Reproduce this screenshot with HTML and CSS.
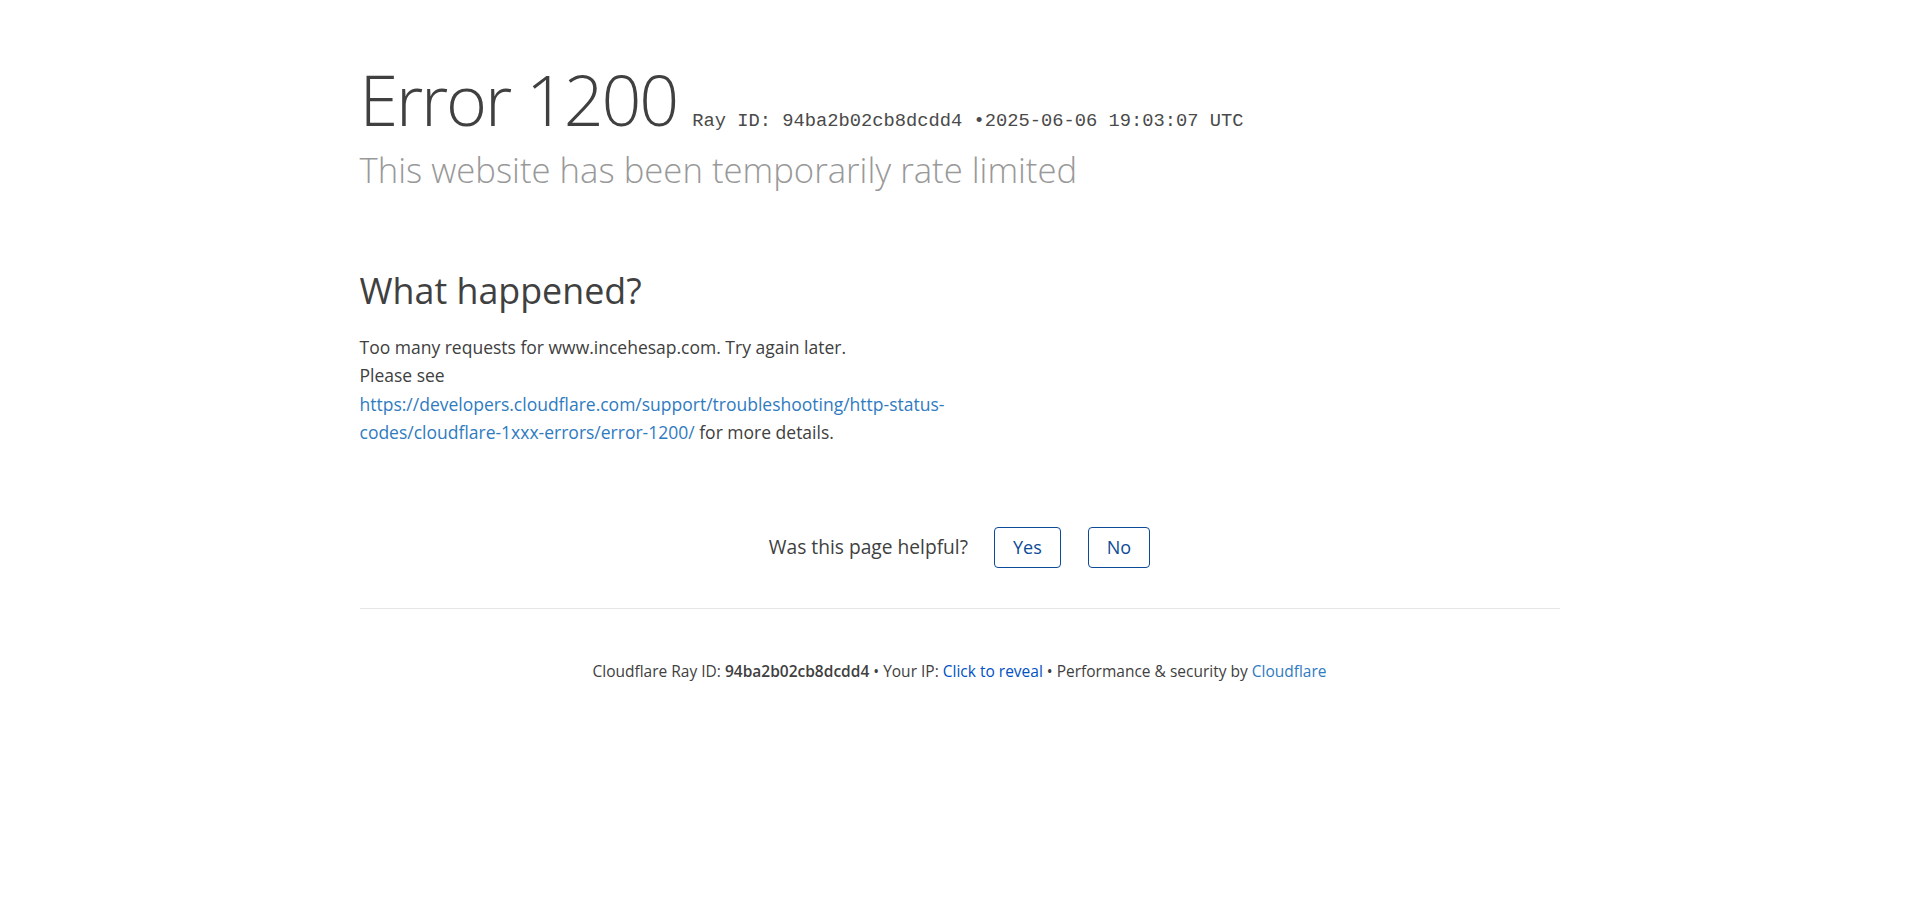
FILE: index.html
```html
<!DOCTYPE html>
<html lang="en">
<head>
<meta charset="utf-8">
<title>Error 1200 - Rate limited</title>
<link rel="stylesheet" href="styles.css">
</head>
<body>
<div class="page">
  <header class="overview">
    <h1 class="title"><span class="code">Error 1200</span> <small class="ray">Ray ID: 94ba2b02cb8dcdd4 •2025-06-06 19:03:07 UTC</small></h1>
    <h2 class="subheadline">This website has been temporarily rate limited</h2>
  </header>

  <section class="details">
    <div class="column">
      <h2 class="section-title">What happened?</h2>
      <p class="text">Too many requests for www.incehesap.com. Try again later.<br>Please see <a class="link" href="#">https://developers.cloudflare.com/support/troubleshooting/http-status-codes/cloudflare-1xxx-errors/error-1200/</a> for more details.</p>
    </div>
  </section>

  <div class="feedback">
    <span class="feedback-label">Was this page helpful?</span>
    <button class="btn" type="button">Yes</button>
    <button class="btn" type="button">No</button>
  </div>

  <footer class="footer">
    <p class="footer-text">Cloudflare Ray ID: <strong class="ray-strong">94ba2b02cb8dcdd4</strong> • Your IP: <span class="reveal">Click to reveal</span> • Performance &amp; security by <a class="brand" href="#">Cloudflare</a></p>
  </footer>
</div>
</body>
</html>
```
FILE: styles.css
```css
html, body {
  margin: 0;
  padding: 0;
  background: #ffffff;
}
body {
  font-family: "Open Sans", "Noto Sans", sans-serif;
  font-size: 17.5px;
  line-height: 1.5;
  color: #404040;
}
.page {
  width: 1200px;
  margin: 0 auto;
}
.overview {
  padding-top: 62px;
}
.title {
  margin: 0 0 9px 0;
  font-size: 70px;
  font-weight: 300;
  line-height: 75px;
  color: #404040;
  white-space: nowrap;
}
.code {
  letter-spacing: -2.2px;
  margin-right: -3px;
}
.ray {
  font-family: "Liberation Mono", "Courier New", monospace;
  font-size: 18.75px;
  font-weight: 400;
  line-height: 1;
  color: #4a4a4a;
  letter-spacing: 0;
}
.subheadline {
  margin: 0;
  font-size: 34.7px;
  font-weight: 300;
  line-height: 48.75px;
  color: #999999;
}
.details {
  padding-top: 71px;
}
.column {
  width: 600px;
}
.section-title {
  margin: 0 0 18px 0;
  font-size: 35.8px;
  font-weight: 400;
  line-height: 48.75px;
  color: #404040;
}
.text {
  margin: 0;
  line-height: 28.5px;
}
.link {
  color: #2f7bbf;
  text-decoration: none;
}
.feedback {
  margin-top: 80px;
  height: 41px;
  display: flex;
  justify-content: center;
  align-items: center;
  font-size: 19.2px;
  color: #404040;
}
.feedback-label {
  margin-right: 26px;
}
.btn {
  height: 41px;
  padding: 0 18px;
  margin: 0 27px 0 0;
  border: 1px solid #0b4b97;
  border-radius: 4px;
  background: #ffffff;
  color: #0b4b97;
  font-family: "Open Sans", "Noto Sans", sans-serif;
  font-size: 18px;
  cursor: pointer;
}
.btn:last-child {
  margin-right: 0;
}
.footer {
  margin-top: 40px;
  border-top: 1px solid #e6e6e6;
  padding-top: 51px;
  text-align: center;
}
.footer-text {
  margin: 0;
  font-size: 15.5px;
  color: #404040;
}
.ray-strong {
  font-weight: 600;
}
.reveal {
  color: #0051c3;
}
.brand {
  color: #2f7bbf;
  text-decoration: none;
}
```
